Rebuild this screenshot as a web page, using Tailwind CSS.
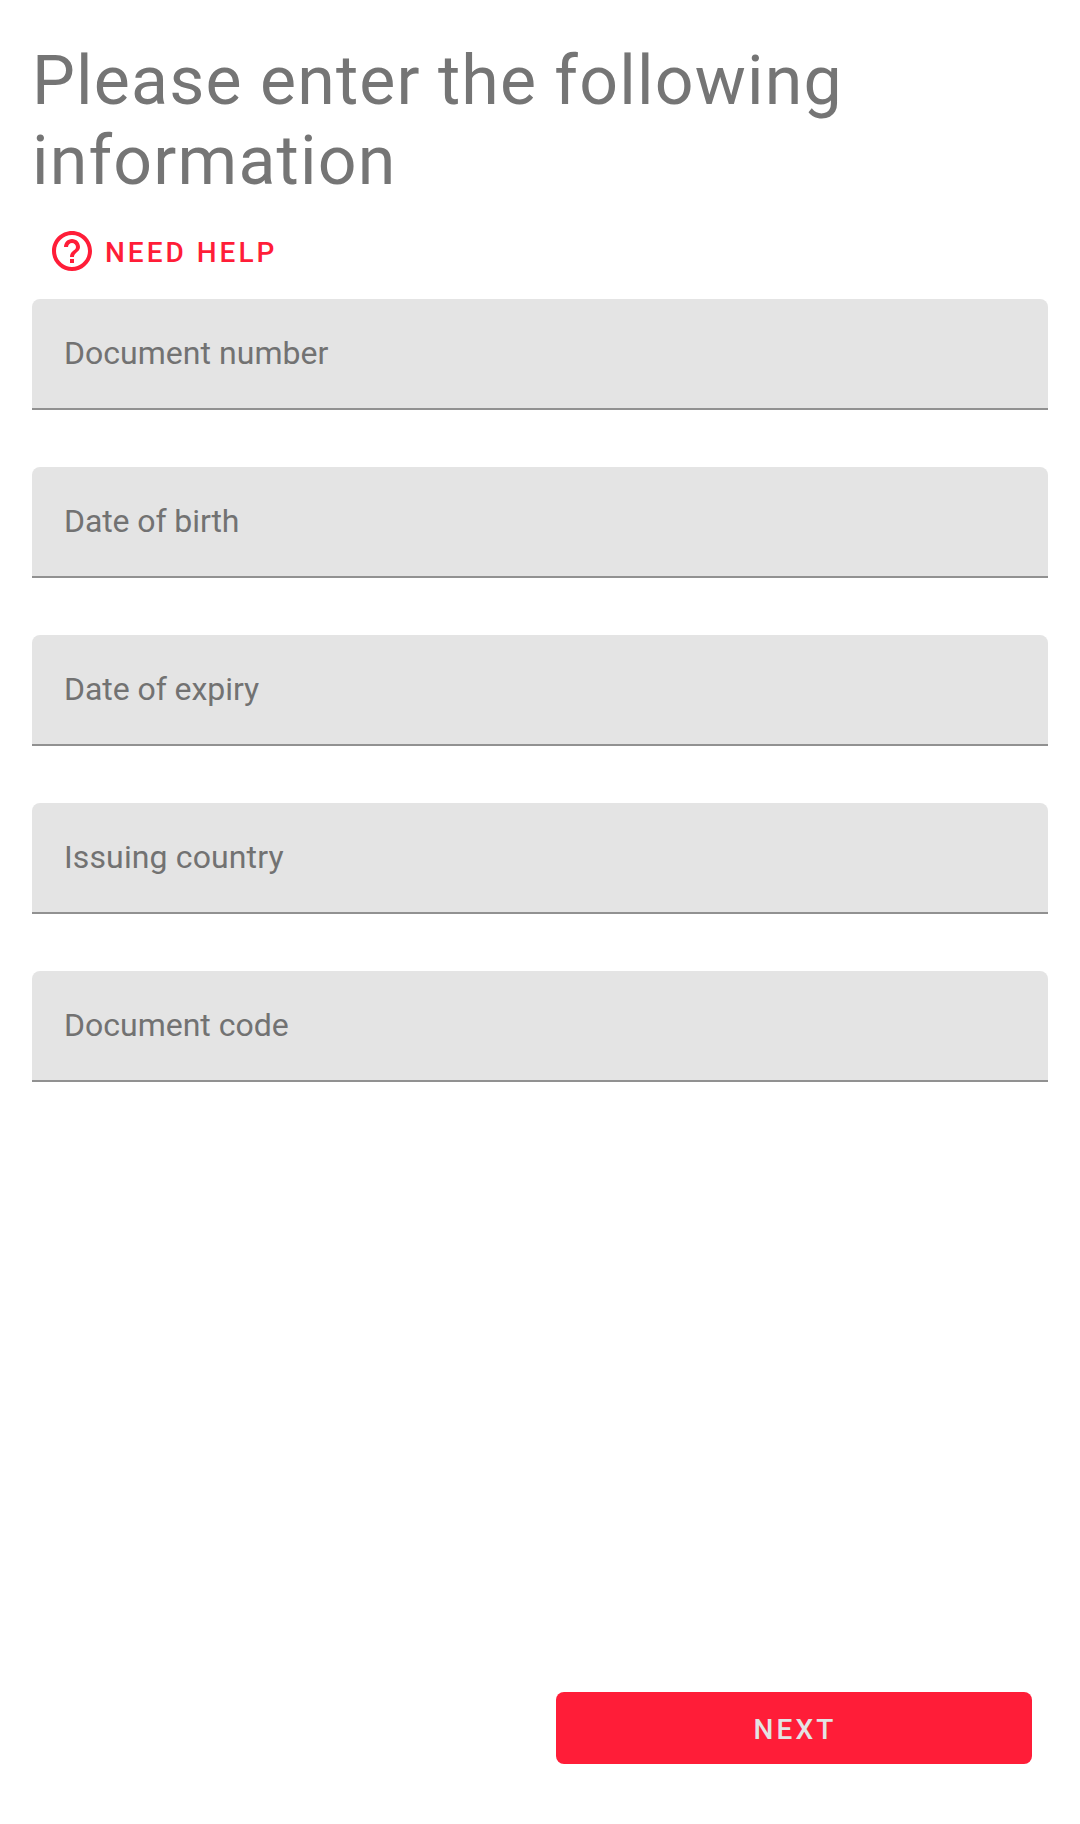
<!DOCTYPE html>
<html lang="en"><head><meta charset="utf-8"><title>Document information</title>
<script src="https://cdn.jsdelivr.net/npm/@tailwindcss/browser@4"></script></head>
<body class="bg-white font-['Roboto',sans-serif]">
<main class="flex h-[1824px] w-[1080px] flex-col px-8 pt-[41px] pb-[60px]">
<h1 class="text-[68px] leading-[80px] tracking-[1.2px] [word-spacing:-1px] text-[#757575]">Please enter the following<br>information</h1>
<a href="#" class="mt-[19px] ml-[16px] flex h-[62px] items-center gap-[9px] text-[28px] font-medium tracking-[3px] text-[#ff1d38]">
<svg class="size-12" viewBox="0 0 24 24" fill="currentColor"><path d="M11 18h2v-2h-2v2zm1-16C6.48 2 2 6.48 2 12s4.480 10 10 10 10-4.480 10-10S17.520 2 12 2zm0 18c-4.410 0-8-3.590-8-8s3.590-8 8-8 8 3.590 8 8-3.590 8-8 8zm0-14c-2.210 0-4 1.790-4 4h2c0-1.100.9-2 2-2s2 .9 2 2c0 2-3 1.750-3 5h2c0-2.250 3-2.500 3-5 0-2.210-1.790-4-4-4z"/></svg><span class="pt-[3px]">NEED HELP</span></a>
<form class="mt-[17px] flex grow flex-col gap-[57px]">
<label class="flex h-[111px] items-center rounded-t-lg border-b-2 border-[#919191] bg-[#e4e4e4] px-8 pb-px text-[32px] tracking-[0.03px] text-[#727272]">Document number</label>
<label class="flex h-[111px] items-center rounded-t-lg border-b-2 border-[#919191] bg-[#e4e4e4] px-8 pb-px text-[32px] tracking-[-0.09px] text-[#727272]">Date of birth</label>
<label class="flex h-[111px] items-center rounded-t-lg border-b-2 border-[#919191] bg-[#e4e4e4] px-8 pb-px text-[32px] tracking-[-0.06px] text-[#727272]">Date of expiry</label>
<label class="flex h-[111px] items-center rounded-t-lg border-b-2 border-[#919191] bg-[#e4e4e4] px-8 pb-px text-[32px] tracking-[0.13px] text-[#727272]">Issuing country</label>
<label class="flex h-[111px] items-center rounded-t-lg border-b-2 border-[#919191] bg-[#e4e4e4] px-8 pb-px text-[32px] text-[#727272]">Document code</label>
<button type="button" class="mt-auto mr-4 h-[72px] w-[476px] self-end rounded-lg bg-[#ff1d38] pt-[3px] pl-[2px] text-[28px] font-medium tracking-[3.1px] text-[#e3e3e3]">NEXT</button>
</form></main></body></html>
